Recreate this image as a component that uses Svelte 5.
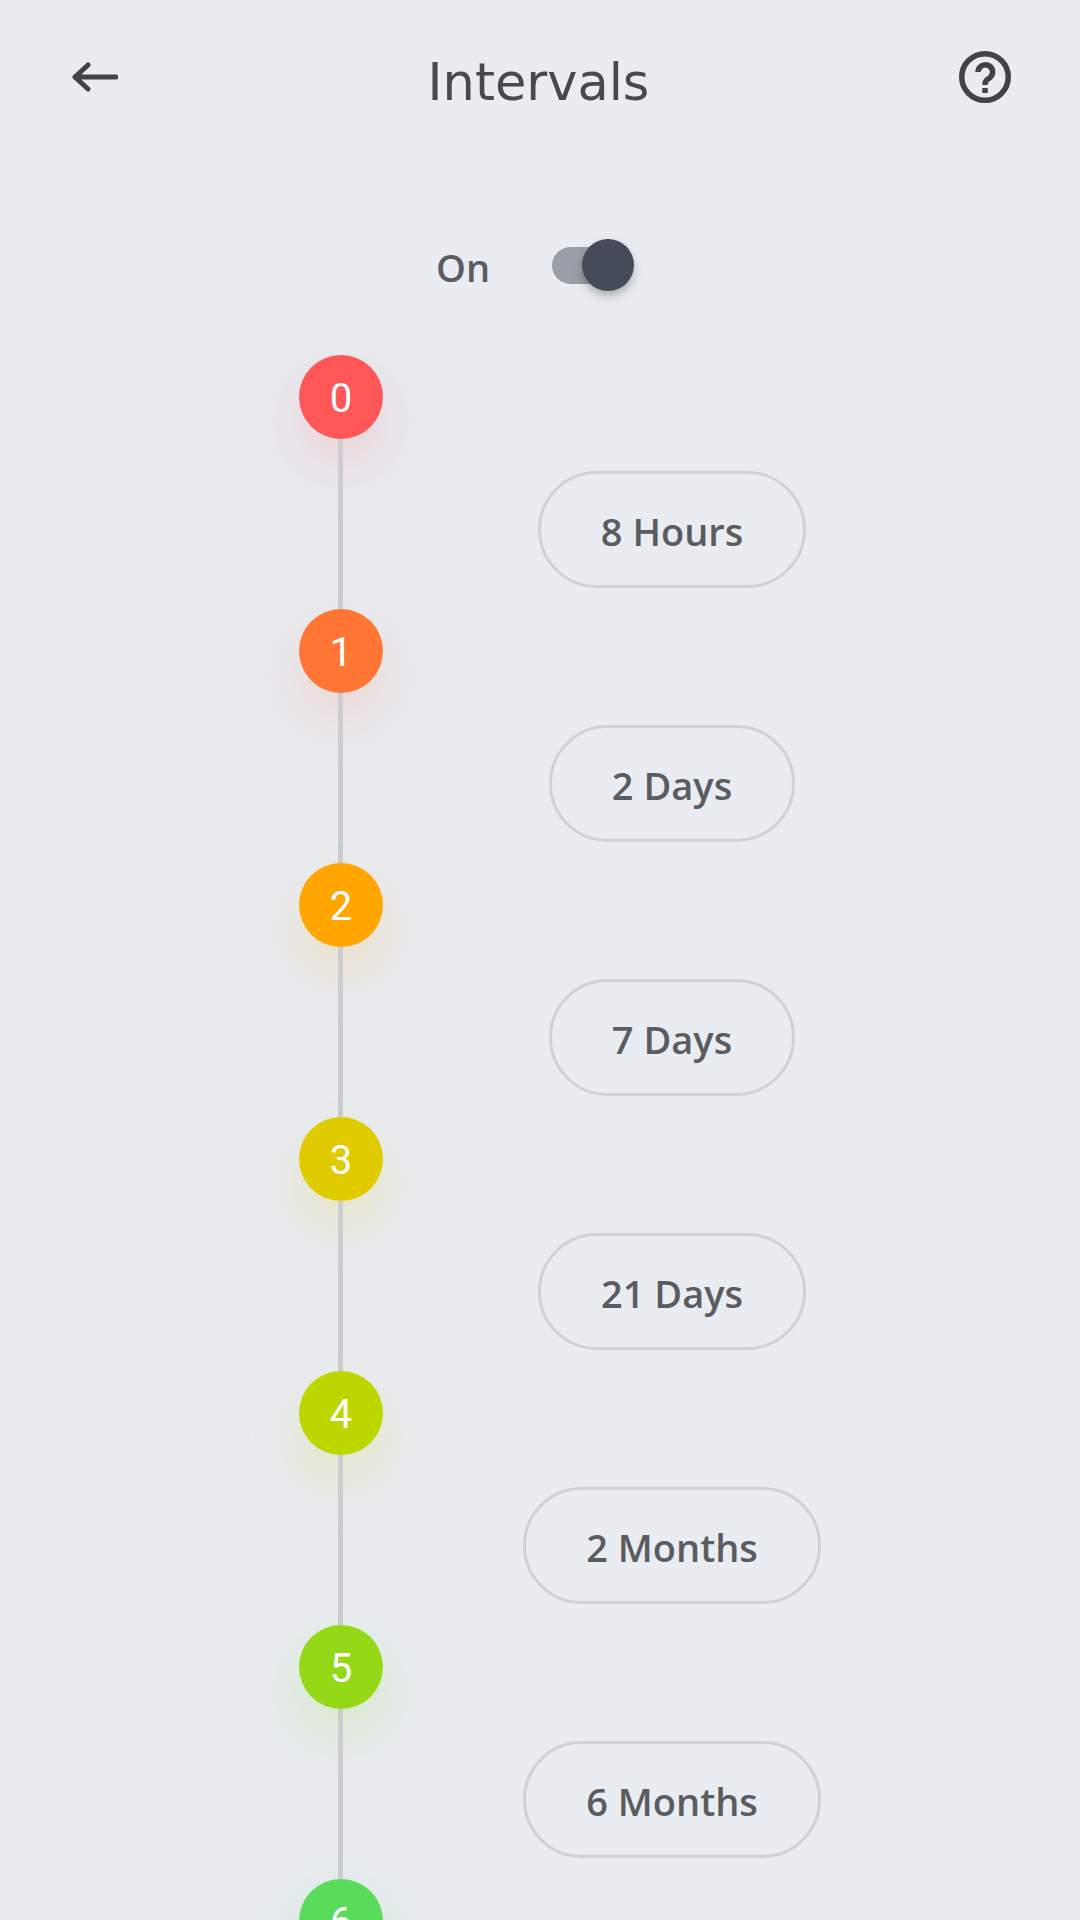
<script>
  const steps = [
    { color: '#ff5757', label: '8 Hours' },
    { color: '#ff7635', label: '2 Days' },
    { color: '#ffa600', label: '7 Days' },
    { color: '#e0cb00', label: '21 Days' },
    { color: '#bdd600', label: '2 Months' },
    { color: '#95d916', label: '6 Months' },
    { color: '#5bdb5b', label: '' }
  ];
</script>

<div class="page">
  <header class="topbar">
    <button class="icon-btn" aria-label="Back">
      <svg width="48" height="36" viewBox="0 0 48 36" fill="none" stroke="#414347" stroke-width="5" stroke-linecap="round" stroke-linejoin="round">
        <path d="M46 18H5M18 6 5 18 18 30" />
      </svg>
    </button>
    <h1>Intervals</h1>
    <button class="icon-btn" aria-label="Help">
      <svg width="52" height="52" viewBox="0 0 52 52" fill="none" stroke="#414347" stroke-width="5.500">
        <circle cx="26" cy="26" r="23.250" />
        <path d="M19 21a7.300 7.300 0 1 1 11.500 6c-3 2-4.500 3-4.500 7" />
        <path d="M26 37v5" />
      </svg>
    </button>
  </header>

  <div class="switch-row">
    <span class="switch-label">On</span>
    <div class="switch">
      <div class="track"></div>
      <div class="knob"></div>
    </div>
  </div>

  <div class="timeline">
    {#each steps as step, i}
      <div class="step">
        <div class="rail">
          <div class="dot" style="background: {step.color}; box-shadow: 0 24px 60px {step.color}38;">{i}</div>
          <div class="line"></div>
        </div>
        <div class="slot">
          {#if step.label}
            <div class="pill">{step.label}</div>
          {/if}
        </div>
      </div>
    {/each}
  </div>
</div>

<style>
  :global(body) {
    margin: 0;
    background: #e9ecf1;
  }

  .page {
    width: 1080px;
    height: 1920px;
    overflow: hidden;
    background: #e9ecf1;
  }

  .topbar {
    display: flex;
    align-items: center;
    justify-content: space-between;
    height: 78px;
    padding: 38px 69px 0 70px;
  }

  .icon-btn {
    display: flex;
    padding: 0;
    border: 0;
    background: none;
  }

  h1 {
    margin: 10px 0 0;
    font-family: "DejaVu Sans", sans-serif;
    font-size: 51px;
    font-weight: 400;
    color: #47494c;
  }

  .switch-row {
    display: flex;
    align-items: center;
    height: 52px;
    margin-top: 123px;
    padding-left: 436px;
  }

  .switch-label {
    width: 116px;
    padding-top: 4px;
    font-family: "Open Sans", sans-serif;
    font-size: 38px;
    font-weight: 600;
    color: #5a5c60;
  }

  .switch {
    position: relative;
    width: 82px;
    height: 52px;
  }

  .track {
    position: absolute;
    top: 8px;
    left: 0;
    width: 60px;
    height: 37px;
    border-radius: 19px;
    background: #9a9ea6;
  }

  .knob {
    position: absolute;
    top: 0;
    right: 0;
    width: 52px;
    height: 52px;
    border-radius: 50%;
    background: #454b58;
    box-shadow: 0 5px 8px rgba(0, 0, 0, 0.25);
  }

  .timeline {
    margin-top: 64px;
    padding-left: 299px;
  }

  .step {
    display: flex;
    height: 254px;
  }

  .rail {
    display: flex;
    flex-direction: column;
    align-items: center;
    width: 84px;
  }

  .dot {
    display: flex;
    flex: none;
    align-items: center;
    justify-content: center;
    box-sizing: border-box;
    width: 84px;
    height: 84px;
    padding-top: 2px;
    border-radius: 50%;
    font-family: "Roboto", sans-serif;
    font-size: 40px;
    color: #fff;
  }

  .line {
    flex: 1;
    width: 5px;
    margin-left: -1px;
    background: #cbcdd1;
  }

  .slot {
    display: flex;
    justify-content: center;
    width: 578px;
    padding-top: 116px;
  }

  .pill {
    display: flex;
    align-items: center;
    height: 117px;
    box-sizing: border-box;
    padding: 2px 60px 0;
    border: 3px solid #cfd2d6;
    border-radius: 59px;
    font-family: "Open Sans", sans-serif;
    font-size: 38px;
    font-weight: 600;
    color: #5a5c60;
  }
</style>
